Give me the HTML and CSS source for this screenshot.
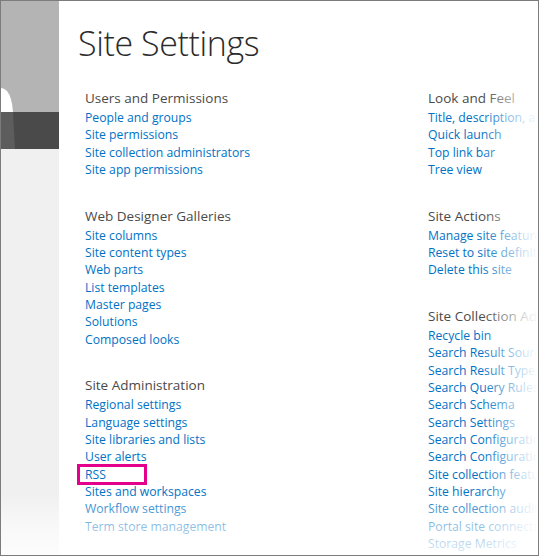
FILE: index.html
```html
<!DOCTYPE html>
<html lang="en">
<head>
<meta charset="utf-8">
<title>Site Settings</title>
<link rel="stylesheet" href="styles.css">
</head>
<body>
<div class="frame">
  <aside class="rail">
    <svg class="rail-art" width="58" height="148" viewBox="0 0 58 148" aria-hidden="true">
      <rect x="0" y="0" width="58" height="111" fill="#b4b4b4"/>
      <path d="M0 87 Q3 87 6 90 Q11 96 12 111 L0 111 Z" fill="#ffffff"/>
      <rect x="0" y="111" width="58" height="37" fill="#4a4a4a"/>
      <path d="M0 111 L12 111 L14 148 L0 148 Z" fill="#5d5d5d"/>
    </svg>
    <div class="rail-fill"></div>
  </aside>
  <main class="content">
    <h1 class="title">Site Settings</h1>
    <div class="columns">
      <div class="col">
        <section class="group">
          <h2 class="group-title">Users and Permissions</h2>
          <ul class="links">
            <li><a href="#">People and groups</a></li>
            <li><a href="#">Site permissions</a></li>
            <li><a href="#">Site collection administrators</a></li>
            <li><a href="#">Site app permissions</a></li>
          </ul>
        </section>
        <section class="group">
          <h2 class="group-title">Web Designer Galleries</h2>
          <ul class="links">
            <li><a href="#">Site columns</a></li>
            <li><a href="#">Site content types</a></li>
            <li><a href="#">Web parts</a></li>
            <li><a href="#">List templates</a></li>
            <li><a href="#">Master pages</a></li>
            <li><a href="#">Solutions</a></li>
            <li><a href="#">Composed looks</a></li>
          </ul>
        </section>
        <section class="group">
          <h2 class="group-title">Site Administration</h2>
          <ul class="links">
            <li><a href="#">Regional settings</a></li>
            <li><a href="#">Language settings</a></li>
            <li><a href="#">Site libraries and lists</a></li>
            <li><a href="#">User alerts</a></li>
            <li class="highlight"><a href="#">RSS</a></li>
            <li><a href="#">Sites and workspaces</a></li>
            <li><a href="#">Workflow settings</a></li>
            <li><a href="#">Term store management</a></li>
          </ul>
        </section>
      </div>
      <div class="col">
        <section class="group">
          <h2 class="group-title">Look and Feel</h2>
          <ul class="links">
            <li><a href="#">Title, description, and logo</a></li>
            <li><a href="#">Quick launch</a></li>
            <li><a href="#">Top link bar</a></li>
            <li><a href="#">Tree view</a></li>
          </ul>
        </section>
        <section class="group">
          <h2 class="group-title">Site Actions</h2>
          <ul class="links">
            <li><a href="#">Manage site features</a></li>
            <li><a href="#">Reset to site definition</a></li>
            <li><a href="#">Delete this site</a></li>
          </ul>
        </section>
        <section class="group">
          <h2 class="group-title">Site Collection Administration</h2>
          <ul class="links">
            <li><a href="#">Recycle bin</a></li>
            <li><a href="#">Search Result Sources</a></li>
            <li><a href="#">Search Result Types</a></li>
            <li><a href="#">Search Query Rules</a></li>
            <li><a href="#">Search Schema</a></li>
            <li><a href="#">Search Settings</a></li>
            <li><a href="#">Search Configuration Import</a></li>
            <li><a href="#">Search Configuration Export</a></li>
            <li><a href="#">Site collection features</a></li>
            <li><a href="#">Site hierarchy</a></li>
            <li><a href="#">Site collection audit settings</a></li>
            <li><a href="#">Portal site connection</a></li>
            <li><a href="#">Storage Metrics</a></li>
          </ul>
        </section>
      </div>
    </div>
  </main>
  <div class="fade" aria-hidden="true"></div>
</div>
</body>
</html>
```

FILE: styles.css
```css
*, *::before, *::after { box-sizing: border-box; }

html, body {
  margin: 0;
  padding: 0;
  background: #ffffff;
}

body {
  font-family: "Open Sans", "Noto Sans", "Liberation Sans", sans-serif;
  width: 540px;
  height: 557px;
  overflow: hidden;
}

.frame {
  position: relative;
  width: 539px;
  height: 556px;
  border: 1px solid #7c7c7c;
  display: flex;
  overflow: hidden;
  background: #ffffff;
}

.rail {
  width: 58px;
  flex: 0 0 58px;
  display: flex;
  flex-direction: column;
}

.rail-art {
  display: block;
  flex: 0 0 auto;
}

.rail-fill {
  flex: 1 1 auto;
  background: #f0f0f0;
}

.content {
  flex: 1 1 auto;
  min-width: 0;
  padding: 18px 0 0 19px;
}

.title {
  margin: 0;
  font-family: "Open Sans", "Noto Sans", sans-serif;
  font-weight: 300;
  font-size: 34px;
  line-height: 48px;
  color: #2b2b2b;
  letter-spacing: -0.4px;
}

.columns {
  display: grid;
  grid-template-columns: 343px 200px;
  padding: 21px 0 0 7px;
}

.group + .group {
  margin-top: 27.4px;
}

.group-title {
  margin: 0;
  font-weight: 400;
  font-size: 13.5px;
  line-height: 21px;
  color: #4a4a4a;
  white-space: nowrap;
}

.links {
  list-style: none;
  margin: 0;
  padding: 0;
}

.links li {
  font-size: 12.2px;
  line-height: 17.33px;
  white-space: nowrap;
}

.links a {
  color: #0072c6;
  text-decoration: none;
}

.highlight {
  position: relative;
}

.highlight::before {
  content: "";
  position: absolute;
  left: -8px;
  top: -1.5px;
  width: 70px;
  height: 21px;
  border: 3px solid #e4008b;
}

.fade {
  position: absolute;
  inset: 0;
  pointer-events: none;
  background:
    linear-gradient(to right, rgba(255,255,255,0) 0, rgba(255,255,255,0) 480px, rgba(255,255,255,0.85) 528px, #ffffff 537px),
    linear-gradient(to bottom, rgba(255,255,255,0) 0, rgba(255,255,255,0) 492px, rgba(255,255,255,0.55) 525px, rgba(255,255,255,0.85) 554px);
}
```
